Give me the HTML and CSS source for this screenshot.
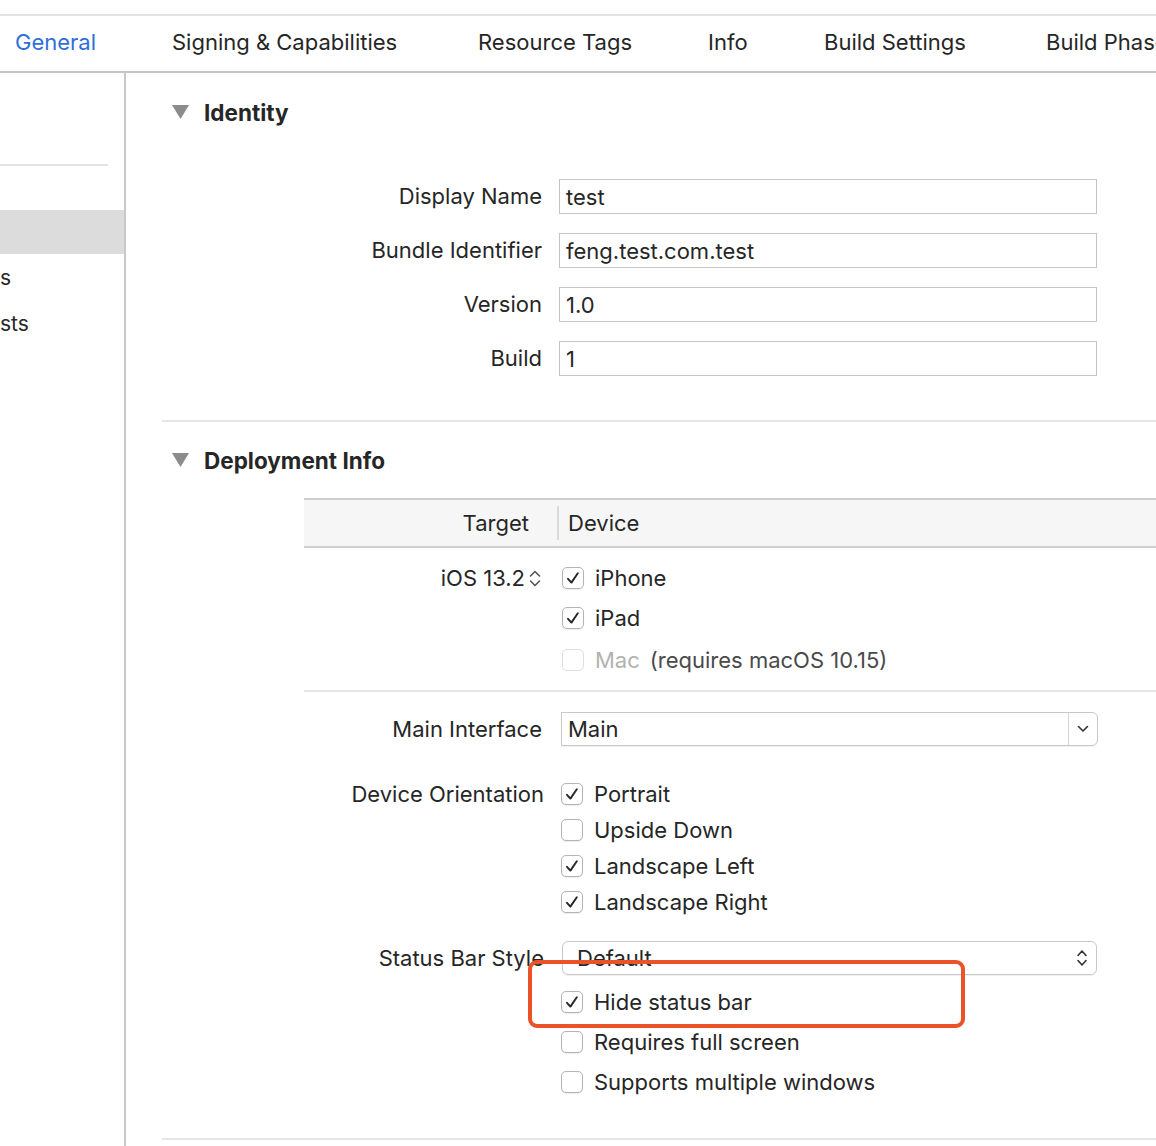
FILE: index.html
```html
<!DOCTYPE html>
<html>
<head>
<meta charset="utf-8">
<link rel="stylesheet" href="styles.css">
</head>
<body>
<div class="app">
  <div class="topstrip"></div>
  <nav class="tabs">
    <span class="tab active t-general">General</span>
    <span class="tab t-signing">Signing &amp; Capabilities</span>
    <span class="tab t-resource">Resource Tags</span>
    <span class="tab t-info">Info</span>
    <span class="tab t-settings">Build Settings</span>
    <span class="tab t-phases">Build Phases</span>
  </nav>
  <div class="body">
    <aside class="sidebar">
      <div class="sb-top"></div>
      <div class="sb-line"></div>
      <div class="sb-sel"></div>
      <div class="sb-item sb-item1">s</div>
      <div class="sb-item sb-item2">sts</div>
    </aside>
    <main class="main">
      <div class="sec-head sec-identity">
        <svg class="tri" width="17" height="14" viewBox="0 0 17 14"><path d="M0 0 H17 L8.5 14 Z" fill="#8c8c8c"/></svg>
        <span class="sec-title">Identity</span>
      </div>
      <div class="fields">
        <div class="frow"><div class="lbl">Display Name</div><div class="field">test</div></div>
        <div class="frow"><div class="lbl">Bundle Identifier</div><div class="field">feng.test.com.test</div></div>
        <div class="frow"><div class="lbl">Version</div><div class="field">1.0</div></div>
        <div class="frow"><div class="lbl">Build</div><div class="field">1</div></div>
      </div>
      <div class="sep sep-identity"></div>
      <div class="sec-head sec-deploy">
        <svg class="tri" width="17" height="14" viewBox="0 0 17 14"><path d="M0 0 H17 L8.5 14 Z" fill="#8c8c8c"/></svg>
        <span class="sec-title">Deployment Info</span>
      </div>
      <div class="tbl-head">
        <div class="th-target">Target</div>
        <div class="th-div"></div>
        <div class="th-device">Device</div>
      </div>
      <div class="tbl-body">
        <div class="tb-target">
          <span>iOS 13.2</span>
          <svg class="stepper" width="14" height="21" viewBox="0 0 14 21"><path d="M2.5 8 L7 3.5 L11.5 8 M2.5 13 L7 17.5 L11.5 13" fill="none" stroke="#555" stroke-width="1.6" stroke-linecap="round" stroke-linejoin="round"/></svg>
        </div>
        <div class="tb-device">
          <div class="ck-row"><span class="ck on"><svg width="22" height="22" viewBox="0 0 22 22"><path d="M6 11.8 L9.4 15.6 L15.8 6.2" fill="none" stroke="#262626" stroke-width="1.9" stroke-linecap="round" stroke-linejoin="round"/></svg></span><span class="ck-text">iPhone</span></div>
          <div class="ck-row r-ipad"><span class="ck on"><svg width="22" height="22" viewBox="0 0 22 22"><path d="M6 11.8 L9.4 15.6 L15.8 6.2" fill="none" stroke="#262626" stroke-width="1.9" stroke-linecap="round" stroke-linejoin="round"/></svg></span><span class="ck-text">iPad</span></div>
          <div class="ck-row r-mac"><span class="ck disabled"></span><span class="ck-text dim">Mac</span><span class="ck-text note">(requires macOS 10.15)</span></div>
        </div>
      </div>
      <div class="sep sep-table"></div>
      <div class="frow r-main">
        <div class="lbl">Main Interface</div>
        <div class="combo">
          <div class="combo-text">Main</div>
          <div class="combo-btn"><svg width="12" height="8" viewBox="0 0 12 8"><path d="M1.5 1.5 L6 6 L10.5 1.5" fill="none" stroke="#333" stroke-width="1.6" stroke-linecap="round" stroke-linejoin="round"/></svg></div>
        </div>
      </div>
      <div class="frow r-orient">
        <div class="lbl">Device Orientation</div>
        <div class="val list">
          <div class="ck-row"><span class="ck on"><svg width="22" height="22" viewBox="0 0 22 22"><path d="M6 11.8 L9.4 15.6 L15.8 6.2" fill="none" stroke="#262626" stroke-width="1.9" stroke-linecap="round" stroke-linejoin="round"/></svg></span><span class="ck-text">Portrait</span></div>
          <div class="ck-row"><span class="ck"></span><span class="ck-text">Upside Down</span></div>
          <div class="ck-row"><span class="ck on"><svg width="22" height="22" viewBox="0 0 22 22"><path d="M6 11.8 L9.4 15.6 L15.8 6.2" fill="none" stroke="#262626" stroke-width="1.9" stroke-linecap="round" stroke-linejoin="round"/></svg></span><span class="ck-text">Landscape Left</span></div>
          <div class="ck-row"><span class="ck on"><svg width="22" height="22" viewBox="0 0 22 22"><path d="M6 11.8 L9.4 15.6 L15.8 6.2" fill="none" stroke="#262626" stroke-width="1.9" stroke-linecap="round" stroke-linejoin="round"/></svg></span><span class="ck-text">Landscape Right</span></div>
        </div>
      </div>
      <div class="frow r-status">
        <div class="lbl lbl-popup">Status Bar Style</div>
        <div class="val">
          <div class="popup">
            <span class="popup-text">Default</span>
            <svg class="updown" width="14" height="22" viewBox="0 0 14 22"><path d="M3 8.5 L7 4 L11 8.5 M3 13.5 L7 18 L11 13.5" fill="none" stroke="#333" stroke-width="1.6" stroke-linecap="round" stroke-linejoin="round"/></svg>
          </div>
          <div class="list list-status">
            <div class="ck-row"><span class="ck on"><svg width="22" height="22" viewBox="0 0 22 22"><path d="M6 11.8 L9.4 15.6 L15.8 6.2" fill="none" stroke="#262626" stroke-width="1.9" stroke-linecap="round" stroke-linejoin="round"/></svg></span><span class="ck-text">Hide status bar</span></div>
            <div class="ck-row r-gap"><span class="ck"></span><span class="ck-text">Requires full screen</span></div>
            <div class="ck-row r-gap"><span class="ck"></span><span class="ck-text">Supports multiple windows</span></div>
          </div>
        </div>
      </div>
      <div class="sep sep-bottom"></div>
      <div class="highlight"></div>
    </main>
  </div>
</div>
</body>
</html>
```

FILE: styles.css
```css
* { box-sizing: border-box; }
html, body { margin: 0; padding: 0; background: #fff; }
body {
  width: 1156px;
  height: 1146px;
  overflow: hidden;
  font-family: "Inter", "Roboto", "Liberation Sans", sans-serif;
  font-size: 22px;
  color: #262626;
}
.app { width: 1156px; height: 1146px; display: flex; flex-direction: column; }
.topstrip { height: 16px; border-bottom: 2px solid #e4e4e4; flex: none; }
.tabs {
  height: 57px;
  flex: none;
  display: flex;
  align-items: center;
  padding-left: 15px;
  padding-bottom: 4px;
  border-bottom: 2px solid #c6c6c6;
  white-space: nowrap;
  overflow: hidden;
}
.tab { font-size: 22px; color: #262626; flex: none; }
.tab.active { color: #2e6fd9; }
.t-general { width: 157px; }
.t-signing { width: 306px; }
.t-resource { width: 230px; }
.t-info { width: 116px; }
.t-settings { width: 222px; }
.body { flex: 1; display: flex; min-height: 0; }
.sidebar {
  width: 126px;
  flex: none;
  border-right: 2px solid #c8c8c8;
  overflow: hidden;
}
.sb-top { height: 91px; }
.sb-line { width: 108px; height: 2px; background: #e3e3e3; }
.sb-sel { margin-top: 44px; height: 44px; background: #dcdcdc; }
.sb-item { height: 24px; line-height: 24px; white-space: nowrap; font-size: 21px; }
.sb-item1 { margin-top: 12px; }
.sb-item2 { margin-top: 22px; }

.main { flex: 1; position: relative; padding-left: 36px; }
.sec-head { display: flex; align-items: center; height: 40px; }
.sec-identity { margin-top: 19px; }
.sec-deploy { margin-top: 18px; }
.tri { margin-left: 10px; margin-right: 15px; flex: none; }
.sec-title { font-weight: 700; font-size: 22.5px; }

.fields { margin-top: 47px; display: flex; flex-direction: column; gap: 19px; }
.frow { display: flex; align-items: flex-start; }
.lbl { width: 380px; flex: none; text-align: right; line-height: 35px; height: 35px; white-space: nowrap; }
.field {
  margin-left: 17px;
  width: 538px;
  height: 35px;
  border: 1px solid #c4c4c4;
  padding-left: 6px;
  line-height: 35px;
}
.sep { height: 2px; background: #e6e6e6; }
.sep-identity { margin-top: 44px; }
.sep-table { margin-top: 19px; margin-left: 142px; }
.sep-bottom { margin-top: 45px; }

.tbl-head {
  margin-top: 18px;
  margin-left: 142px;
  height: 50px;
  border-top: 2px solid #cfcfcf;
  border-bottom: 2px solid #cfcfcf;
  background: #f6f6f6;
  display: flex;
  align-items: center;
}
.th-target { width: 253px; text-align: right; padding-right: 28px; }
.th-div { width: 2px; height: 34px; background: #dadada; }
.th-device { padding-left: 9px; }

.tbl-body { margin-top: 19px; margin-left: 142px; display: flex; }
.tb-target {
  width: 254px;
  height: 22px;
  display: flex;
  justify-content: flex-end;
  align-items: center;
  padding-right: 16px;
  line-height: 22px;
}
.stepper { margin-left: 3px; }
.tb-device { padding-left: 4px; }
.r-ipad { margin-top: 18px; }
.r-mac { margin-top: 20px; }

.ck-row { display: flex; align-items: center; height: 22px; white-space: nowrap; }
.ck {
  width: 22px;
  height: 22px;
  flex: none;
  border: 1px solid #b4b4b4;
  border-radius: 5px;
  background: #fff;
  box-shadow: 0 0.5px 1px rgba(0,0,0,0.08);
  position: relative;
}
.ck svg { position: absolute; left: -1px; top: -1px; }
.ck.disabled { border-color: #dedede; box-shadow: none; }
.ck-text { margin-left: 11px; line-height: 22px; }
.dim { color: #b2b2b2; }
.note { margin-left: 10px; color: #4a4a4a; }

.r-main { margin-top: 20px; }
.r-main .lbl { height: 34px; line-height: 34px; }
.combo {
  margin-left: 19px;
  width: 537px;
  height: 34px;
  display: flex;
  border: 1px solid #c8c8c8;
  border-radius: 0 6px 6px 0;
  box-shadow: 0 1px 1px rgba(0,0,0,0.06);
}
.combo-text { flex: 1; padding-left: 6px; line-height: 32px; }
.combo-btn {
  width: 29px;
  border-left: 1px solid #d4d4d4;
  display: flex;
  align-items: center;
  justify-content: center;
}

.r-orient { margin-top: 37px; }
.r-orient .lbl, .lbl-popup { height: 22px; line-height: 22px; }
.r-orient .lbl { width: 382px; }
.val { margin-left: 19px; }
.r-orient .val { margin-left: 17px; }
.list { display: flex; flex-direction: column; gap: 14px; }
.r-status { margin-top: 28px; }
.lbl-popup { margin-top: 6px; width: 382px; }
.r-status .val { margin-left: 17px; }
.popup {
  margin-left: 1px;
  width: 535px;
  height: 34px;
  border: 1px solid #c8c8c8;
  border-radius: 6px;
  box-shadow: 0 1px 1px rgba(0,0,0,0.07);
  display: flex;
  align-items: center;
  justify-content: space-between;
  padding-left: 14px;
  padding-right: 7px;
}
.popup-text { line-height: 32px; }
.list-status { margin-top: 16px; gap: 0; }
.r-gap { margin-top: 18px; }

.highlight {
  position: absolute;
  left: 402px;
  top: 887px;
  width: 437px;
  height: 68px;
  border: 4px solid #ea5229;
  border-radius: 9px;
}
```
